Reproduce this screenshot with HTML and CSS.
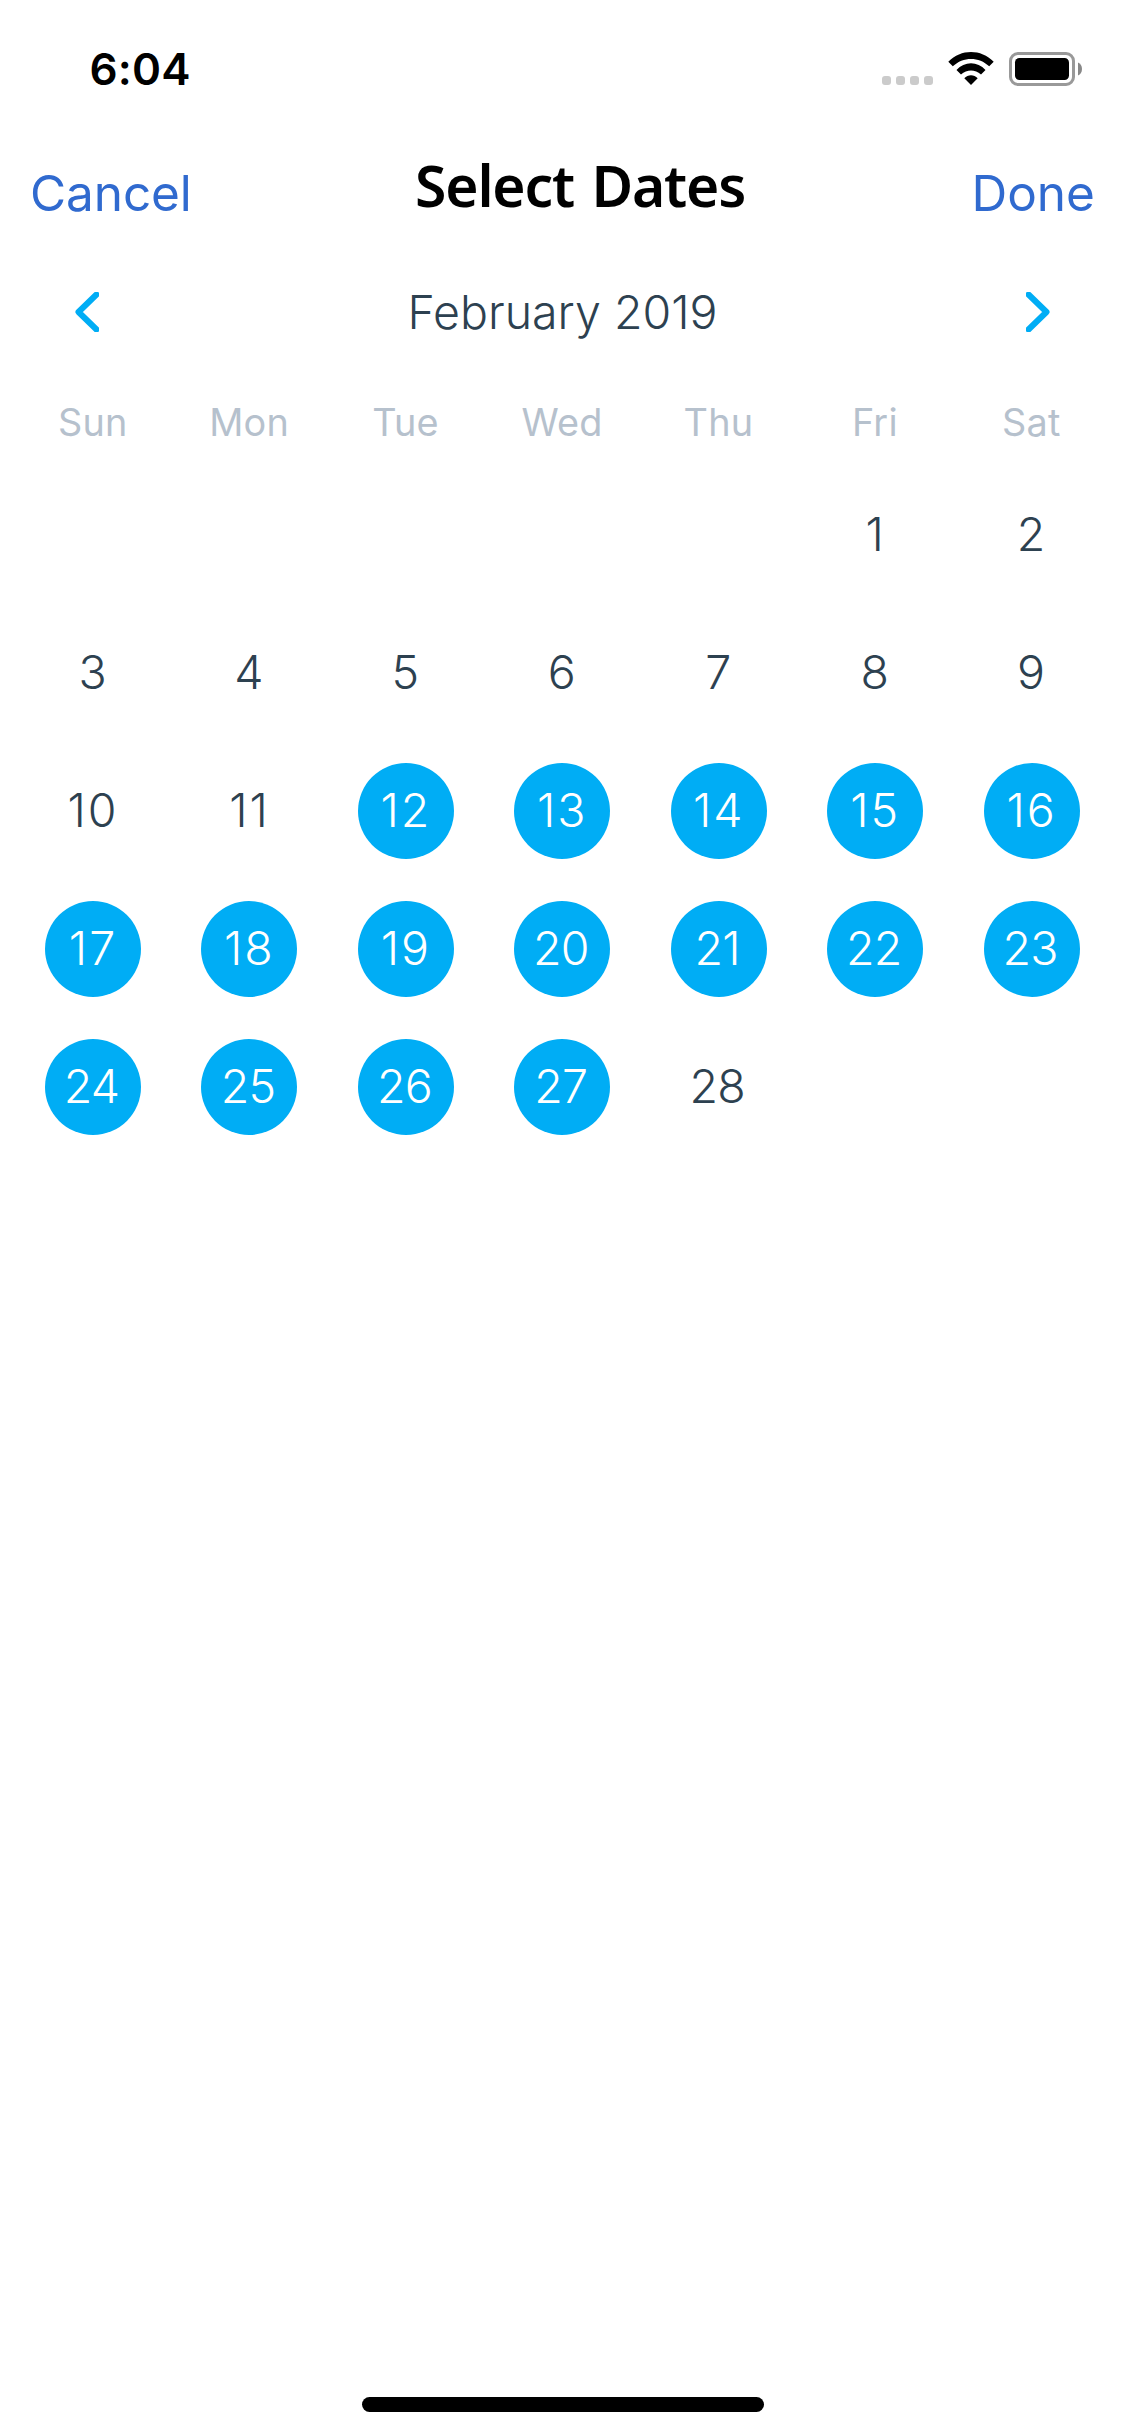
FILE: index.html
```
<!DOCTYPE html>
<html lang="en">
<head>
<meta charset="utf-8">
<title>Select Dates</title>
<link rel="stylesheet" href="styles.css">
</head>
<body>
<main class="screen">
  <header class="status">
    <span class="time">6:04</span>
    <svg width="202" height="36" viewBox="881 51 202 36" aria-hidden="true">
      <g fill="#cbcbcb">
        <rect x="882" y="76" width="9" height="9" rx="3"/>
        <rect x="896" y="76" width="9" height="9" rx="3"/>
        <rect x="910" y="76" width="9" height="9" rx="3"/>
        <rect x="924" y="76" width="9" height="9" rx="3"/>
      </g>
      <path d="M948.3 61.8C961 48.8 981 48.8 993.7 61.8L989.2 66.3C979 56.5 963 56.5 952.8 66.3ZM956.5 70C964.5 61 977.5 61 985.5 70L981 74.5C975 69 967 69 961 74.5ZM964.3 78.2C968 74.1 974 74.1 977.7 78.2L971 85Z"/>
      <rect x="1010.5" y="53.5" width="63" height="31" rx="7.5" fill="none" stroke="#999" stroke-width="3"/>
      <rect x="1015" y="58" width="54" height="22" rx="4.5"/>
      <path d="M1078 62.5C1080.5 63.5 1082 66 1082 69S1080.5 74.5 1078 75.5Z" fill="#888"/>
    </svg>
  </header>
  <nav class="bar">
    <a class="action cancel">Cancel</a>
    <h1 class="title">Select Dates</h1>
    <a class="action">Done</a>
  </nav>
  <section class="month-bar">
    <svg class="arrow" width="24" height="40" viewBox="0 0 24 40" aria-hidden="true"><path d="M21.5 2.5L3.5 20L21.5 37.5"/></svg>
    <h2 class="month">February 2019</h2>
    <svg class="arrow" width="24" height="40" viewBox="0 0 24 40" aria-hidden="true"><path d="M2.5 2.5L20.5 20L2.5 37.5"/></svg>
  </section>
  <div class="weekdays">
    <span>Sun</span><span>Mon</span><span>Tue</span><span>Wed</span><span>Thu</span><span>Fri</span><span>Sat</span>
  </div>
  <div class="days">
    <span class="day first">1</span>
    <span class="day">2</span>
    <span class="day">3</span>
    <span class="day">4</span>
    <span class="day">5</span>
    <span class="day">6</span>
    <span class="day">7</span>
    <span class="day">8</span>
    <span class="day">9</span>
    <span class="day teen">10</span>
    <span class="day teen">11</span>
    <span class="day teen selected">12</span>
    <span class="day teen selected">13</span>
    <span class="day teen selected">14</span>
    <span class="day teen selected">15</span>
    <span class="day teen selected">16</span>
    <span class="day teen selected">17</span>
    <span class="day teen selected">18</span>
    <span class="day teen selected">19</span>
    <span class="day twenty selected">20</span>
    <span class="day twenty selected">21</span>
    <span class="day twenty selected">22</span>
    <span class="day twenty selected">23</span>
    <span class="day twenty selected">24</span>
    <span class="day twenty selected">25</span>
    <span class="day twenty selected">26</span>
    <span class="day twenty selected">27</span>
    <span class="day twenty">28</span>
  </div>
  <div class="home-indicator"></div>
</main>
</body>
</html>
```
FILE: styles.css
```
* {
  box-sizing: border-box;
}

body {
  margin: 0;
  background: #fff;
  font-family: Inter, "Liberation Sans", sans-serif;
}

.screen {
  display: flex;
  flex-direction: column;
  width: 1125px;
  height: 2436px;
}

.status {
  display: flex;
  align-items: center;
  justify-content: space-between;
  height: 138px;
  padding: 0 42px 0 89.5px;
}

.time {
  font-size: 44px;
  font-weight: 600;
  letter-spacing: 0.2px;
  color: #000;
}

.bar {
  display: flex;
  align-items: center;
  justify-content: space-between;
  height: 110px;
  padding: 0 30px 0 30px;
}

.action {
  font-size: 49.5px;
  font-weight: 420;
  color: #306acf;
}

.cancel {
  letter-spacing: -0.1px;
}

.title {
  margin: 0 3px 16px 0;
  font: 600 57px "Noto Sans", sans-serif;
  letter-spacing: -1.2px;
  word-spacing: 4px;
  color: #000;
}

.month-bar {
  display: flex;
  align-items: center;
  justify-content: space-between;
  height: 128px;
  padding: 0 75px;
}

.month {
  margin: 0;
  font-size: 46.5px;
  font-weight: 300;
  color: #2d4150;
}

.arrow path {
  fill: none;
  stroke: #00adf5;
  stroke-width: 6;
  stroke-linecap: round;
  stroke-linejoin: round;
}

.weekdays {
  display: grid;
  grid-template-columns: repeat(7, 1fr);
  align-items: center;
  justify-items: center;
  height: 90px;
  padding: 1px 15.5px 0 14.5px;
  font-size: 37.8px;
  letter-spacing: 0.2px;
  color: #b6c1cd;
}

.days {
  display: grid;
  grid-template-columns: repeat(7, 1fr);
  grid-auto-rows: 138px;
  align-items: center;
  justify-items: center;
  padding: 0 15.2px 0 14.8px;
}

.day {
  display: flex;
  align-items: center;
  justify-content: center;
  width: 96px;
  height: 96px;
  padding: 0 1px 2px 0;
  border-radius: 50%;
  font-size: 46.5px;
  font-weight: 300;
  color: #2d4150;
}

.first {
  grid-column: 6;
}

.teen {
  padding-left: 1px;
  letter-spacing: 2px;
}

.twenty {
  padding-right: 3px;
  letter-spacing: -0.8px;
}

.selected {
  background: #00adf5;
  color: #fff;
}

.home-indicator {
  align-self: center;
  width: 402px;
  height: 15px;
  margin: auto 0 24px;
  border-radius: 8px;
  background: #000;
}
```
